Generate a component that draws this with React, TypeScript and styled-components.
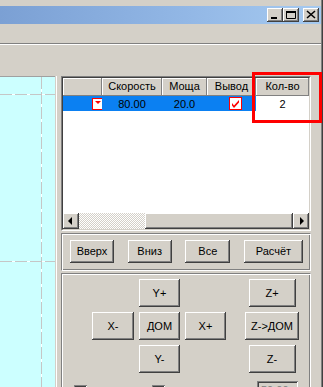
import React from 'react'
import styled, { createGlobalStyle } from 'styled-components'

const GlobalStyle = createGlobalStyle`
  * { box-sizing: border-box; }
  html, body { margin: 0; padding: 0; background: #d4d0c8; }
  body {
    font-family: 'Liberation Sans', Arial, sans-serif;
    font-size: 11px;
    color: #000;
  }
`

const headerCols = [
  { label: '', width: 39 },
  { label: 'Скорость', width: 60 },
  { label: 'Моща', width: 45 },
  { label: 'Вывод', width: 49 },
  { label: 'Кол-во', width: 53 },
]

const MinGlyph = () => (
  <svg width='16' height='14' viewBox='0 0 16 14'>
    <rect x='4' y='9' width='6' height='2' fill='#000' />
  </svg>
)

const MaxGlyph = () => (
  <svg width='16' height='14' viewBox='0 0 16 14'>
    <path d='M3.5 3.5h9v7h-9z' fill='none' stroke='#000' />
    <rect x='3' y='3' width='10' height='2' fill='#000' />
  </svg>
)

const CloseGlyph = () => (
  <svg width='16' height='14' viewBox='0 0 16 14'>
    <path d='M4 3l8 7M12 3l-8 7' stroke='#000' strokeWidth='1.6' />
  </svg>
)

const ArrowLeft = () => (
  <svg width='16' height='16' viewBox='0 0 16 16'>
    <path d='M5 8l4-4v8z' fill='#000' />
  </svg>
)

const ArrowRight = () => (
  <svg width='16' height='16' viewBox='0 0 16 16'>
    <path d='M11 8l-4-4v8z' fill='#000' />
  </svg>
)

const DropBox = () => (
  <svg width='12' height='12' viewBox='0 0 12 12'>
    <rect x='0.5' y='0.5' width='11' height='11' fill='#fff' stroke='#f00' />
    <path d='M3 3h6l-3 3z' fill='#f00' />
  </svg>
)

const RedCheck = () => (
  <svg width='13' height='13' viewBox='0 0 13 13'>
    <rect x='0.5' y='0.5' width='12' height='12' fill='#fff' stroke='#f00' />
    <path d='M3 6l2 2.5L10 3v2.5L5 11 3 8.5z' fill='#f00' />
  </svg>
)

const CanvasLines = () => (
  <svg width='55' height='310' viewBox='0 0 55 310'>
    <g stroke='#fff' strokeWidth='1'>
      <line x1='0' y1='17.5' x2='55' y2='17.5' />
      <line x1='0' y1='184.5' x2='55' y2='184.5' />
      <line x1='41.5' y1='0' x2='41.5' y2='310' />
    </g>
    <g stroke='#c6c6c6' strokeWidth='1' strokeDasharray='12 3'>
      <line x1='0' y1='17.5' x2='55' y2='17.5' />
      <line x1='0' y1='184.5' x2='55' y2='184.5' />
      <line x1='41.5' y1='0' x2='41.5' y2='310' />
    </g>
  </svg>
)

const App = () => {
  return (
    <>
      <GlobalStyle />
      <Window>
        <Frame>
          <TopEdge />
          <TitleBar>
            <CaptionButton>
              <MinGlyph />
            </CaptionButton>
            <CaptionButton>
              <MaxGlyph />
            </CaptionButton>
            <CaptionButton $gap={4}>
              <CloseGlyph />
            </CaptionButton>
          </TitleBar>
          <MenuBar />
          <Separator />
          <ToolArea />
          <Main>
            <Canvas>
              <CanvasLines />
            </Canvas>
            <Splitter />
            <RightPanel>
              <GridFrame>
                <GridInner>
                  <HeaderRow>
                    {headerCols.map((c) => (
                      <HeaderCell key={c.label || 'sel'} $w={c.width}>
                        {c.label}
                      </HeaderCell>
                    ))}
                  </HeaderRow>
                  <DataRow>
                    <Cell $w={39} $align='flex-end'>
                      <DropSlot>
                        <DropBox />
                      </DropSlot>
                    </Cell>
                    <Cell $w={60}>80.00</Cell>
                    <Cell $w={45}>20.0</Cell>
                    <Cell $w={49}>
                      <CheckSlot>
                        <RedCheck />
                      </CheckSlot>
                    </Cell>
                    <Cell $w={53} $bg='#fff'>
                      2
                    </Cell>
                  </DataRow>
                  <GridBody />
                  <HScroll>
                    <ScrollButton>
                      <ArrowLeft />
                    </ScrollButton>
                    <ScrollTrack />
                    <ScrollThumb />
                    <ScrollButton>
                      <ArrowRight />
                    </ScrollButton>
                  </HScroll>
                </GridInner>
              </GridFrame>

              <Panel>
                <ButtonRow>
                  <Button $w={44} $h={23}>Вверх</Button>
                  <Button $w={44} $h={23}>Вниз</Button>
                  <Button $w={45} $h={23}>Все</Button>
                  <Button $w={59} $h={23}>Расчёт</Button>
                </ButtonRow>
              </Panel>

              <Panel $grow>
                <JogGrid>
                  <Button $w={41} $h={28} $col={3} $row={1}>Y+</Button>
                  <Button $w={47} $h={28} $col={7} $row={1}>Z+</Button>
                  <Button $w={42} $h={28} $col={1} $row={2}>X-</Button>
                  <Button $w={41} $h={28} $col={3} $row={2}>ДОМ</Button>
                  <Button $w={41} $h={28} $col={5} $row={2}>X+</Button>
                  <Button $w={54} $h={28} $col={7} $row={2}>Z-&gt;ДОМ</Button>
                  <Button $w={41} $h={28} $col={3} $row={3}>Y-</Button>
                  <Button $w={47} $h={28} $col={7} $row={3}>Z-</Button>
                </JogGrid>
                <OptionsRow>
                  <CheckOption $w={78}>
                    <Check />
                    Медленно
                  </CheckOption>
                  <CheckOption $w={105}>
                    <Check />
                    Шаг по длине
                  </CheckOption>
                  <NumberBox>50.00</NumberBox>
                </OptionsRow>
              </Panel>
            </RightPanel>
          </Main>
        </Frame>
        <Highlight />
      </Window>
    </>
  )
}

export default App

const raised = `
  box-shadow: inset -1px -1px #404040, inset 1px 1px #fff,
    inset -2px -2px #808080, inset 2px 2px #d4d0c8;
`

const Window = styled.div`
  position: relative;
  width: 323px;
  height: 387px;
  overflow: hidden;
  background: #d4d0c8;
  border-right: 1px solid #404040;
`

const Frame = styled.div`
  height: 100%;
  display: flex;
  flex-direction: column;
  border-right: 1px solid #808080;
`

const TopEdge = styled.div`
  height: 6px;
  flex: none;
`

const TitleBar = styled.div`
  height: 18px;
  flex: none;
  display: flex;
  justify-content: flex-end;
  align-items: center;
  padding-right: 2px;
  background: linear-gradient(90deg, #7ba0d4 0%, #93b8e6 60%, #a6caf0 100%);
`

const CaptionButton = styled.div<{ $gap?: number }>`
  width: 16px;
  height: 14px;
  margin-left: ${(p) => p.$gap || 0}px;
  background: #d4d0c8;
  ${raised}
  svg {
    display: block;
  }
`

const MenuBar = styled.div`
  height: 19px;
  flex: none;
`

const Separator = styled.div`
  height: 2px;
  flex: none;
  border-top: 1px solid #808080;
  border-bottom: 1px solid #fff;
`

const ToolArea = styled.div`
  height: 31px;
  flex: none;
`

const Main = styled.div`
  flex: 1;
  display: flex;
  min-height: 0;
`

const Canvas = styled.div`
  width: 55px;
  flex: none;
  background: #ccffff;
  border-top: 1px solid #a0a0a0;
  overflow: hidden;
  svg {
    display: block;
  }
`

const Splitter = styled.div`
  width: 2px;
  flex: none;
  border-left: 1px solid #d4d0c8;
  background: #fff;
`

const RightPanel = styled.div`
  flex: 1;
  display: flex;
  flex-direction: column;
  gap: 1px;
  padding: 0 10px 0 4px;
`

const GridFrame = styled.div`
  width: 250px;
  height: 155px;
  flex: none;
  border: 1px solid;
  border-color: #808080 #fff #fff #808080;
`

const GridInner = styled.div`
  height: 100%;
  display: flex;
  flex-direction: column;
  border: 1px solid;
  border-color: #404040 #d4d0c8 #d4d0c8 #404040;
  background: #fff;
`

const HeaderRow = styled.div`
  height: 18px;
  flex: none;
  display: flex;
`

const HeaderCell = styled.div<{ $w: number }>`
  width: ${(p) => p.$w}px;
  height: 18px;
  line-height: 17px;
  text-align: center;
  background: #d4d0c8;
  box-shadow: inset -1px -1px #808080, inset 1px 1px #fff;
`

const DataRow = styled.div`
  height: 15px;
  flex: none;
  display: flex;
`

const Cell = styled.div<{ $w: number; $bg?: string; $align?: string }>`
  width: ${(p) => p.$w}px;
  height: 15px;
  display: flex;
  align-items: center;
  justify-content: ${(p) => p.$align || 'center'};
  background: ${(p) => p.$bg || '#0b80f2'};
`

const DropSlot = styled.div`
  margin-right: -2px;
  svg {
    display: block;
  }
`

const CheckSlot = styled.div`
  margin-left: 7px;
  svg {
    display: block;
  }
`

const GridBody = styled.div`
  flex: 1;
  background: #fff;
`

const HScroll = styled.div`
  height: 16px;
  flex: none;
  display: flex;
  background: #d4d0c8;
`

const ScrollButton = styled.div`
  width: 16px;
  height: 16px;
  flex: none;
  background: #d4d0c8;
  ${raised}
  svg {
    display: block;
  }
`

const ScrollTrack = styled.div`
  flex: 1;
  background: repeating-conic-gradient(#d4d0c8 0 25%, #fff 0 50%) 0 0 / 2px 2px;
`

const ScrollThumb = styled.div`
  width: 148px;
  flex: none;
  background: #d4d0c8;
  ${raised}
`

const Panel = styled.div<{ $grow?: boolean }>`
  width: 250px;
  flex: ${(p) => (p.$grow ? 1 : 'none')};
  height: ${(p) => (p.$grow ? 'auto' : '38px')};
  margin-top: 1px;
  border: 1px solid;
  border-color: #808080 #fff #fff #808080;
  box-shadow: inset 1px 1px #fff, inset -1px -1px #808080;
  padding: ${(p) => (p.$grow ? '5px 0 0 30px' : '6px 7px 0 8px')};
`

const ButtonRow = styled.div`
  display: flex;
  justify-content: space-between;
`

const Button = styled.div<{ $w: number; $h: number; $col?: number; $row?: number }>`
  width: ${(p) => p.$w}px;
  height: ${(p) => p.$h}px;
  display: flex;
  align-items: center;
  justify-content: center;
  padding-bottom: 1px;
  background: #d4d0c8;
  ${raised}
  grid-column: ${(p) => p.$col || 'auto'};
  grid-row: ${(p) => p.$row || 'auto'};
  justify-self: center;
`

const JogGrid = styled.div`
  display: grid;
  grid-template-columns: 42px 5px 41px 5px 41px 19px 54px;
  grid-template-rows: repeat(3, 28px);
  row-gap: 5px;
`

const OptionsRow = styled.div`
  display: flex;
  align-items: flex-start;
  margin: 8px 0 0 -18px;
`

const CheckOption = styled.div<{ $w: number }>`
  width: ${(p) => p.$w}px;
  display: flex;
  align-items: center;
  gap: 5px;
  padding-top: 4px;
`

const Check = styled.span`
  width: 13px;
  height: 13px;
  flex: none;
  background: #fff;
  box-shadow: inset 1px 1px #808080, inset -1px -1px #fff,
    inset 2px 2px #404040, inset -2px -2px #d4d0c8;
`

const NumberBox = styled.div`
  width: 41px;
  height: 20px;
  padding: 3px 0 0 4px;
  color: #808080;
  background: #d4d0c8;
  box-shadow: inset 1px 1px #808080, inset -1px -1px #fff,
    inset 2px 2px #404040, inset -2px -2px #d4d0c8;
`

const Highlight = styled.div`
  position: absolute;
  left: 252px;
  top: 72px;
  width: 70px;
  height: 51px;
  border: 3px solid #ff0000;
  pointer-events: none;
`
